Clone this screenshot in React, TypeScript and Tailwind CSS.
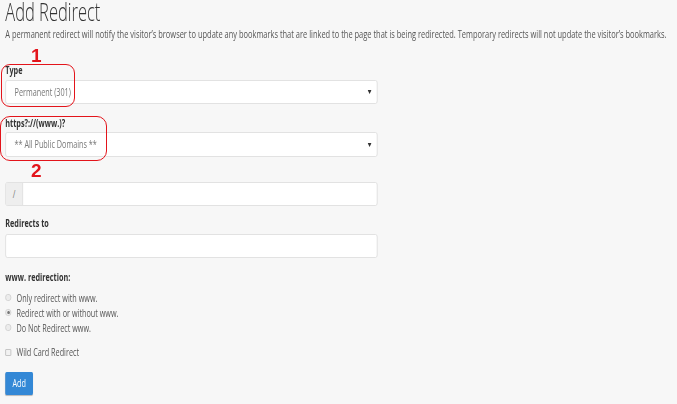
import React from 'react';

function Caret() {
  return (
    <svg width="6" height="4" viewBox="0 0 6 4" className="shrink-0">
      <path d="M0 0 L6 0 L3 4 Z" fill="#333" />
    </svg>
  );
}

function Radio({ checked, label }: { checked?: boolean; label: string }) {
  return (
    <div className="flex h-[15px] items-center gap-[8px]">
      <span className="flex h-[7px] w-[9px] items-center justify-center rounded-full border border-[#cfcfcf] bg-[#ececec]">
        {checked && <span className="h-[3px] w-[4px] rounded-full bg-[#777]" />}
      </span>
      <span className="text-[11px] leading-[15px] text-[#555]">{label}</span>
    </div>
  );
}

export default function App() {
  return (
    <div className="relative h-[404px] w-full overflow-hidden bg-[#f7f7f7] font-['Open_Sans',sans-serif]">
      <div className="w-[1026px] origin-top-left scale-x-[0.66] px-2">
        <h1 className="text-[25px] font-light leading-[22px] text-[#333]">Add Redirect</h1>
        <p className="mt-[5px] text-[11.3px] leading-[14px] text-[#555]">
          A permanent redirect will notify the visitor’s browser to update any bookmarks that are linked to the page that is being redirected. Temporary redirects will not update the visitor’s bookmarks.
        </p>

        <div className="w-[564px]">
          <label className="mt-[22px] block text-[11px] font-bold leading-[14px] text-[#333]">Type</label>
          <div className="mt-[3px] flex h-[24px] items-center justify-between rounded-[3px] border border-[#dcdcdc] bg-white pl-[13px] pr-[8px]">
            <span className="text-[11px] text-[#777]">Permanent (301)</span>
            <Caret />
          </div>

          <label className="mt-[12px] block text-[11px] font-bold leading-[14px] text-[#333]">https?://(www.)?</label>
          <div className="mt-[2px] flex h-[25px] items-center justify-between rounded-[3px] border border-[#dcdcdc] bg-white pl-[13px] pr-[8px]">
            <span className="text-[11px] text-[#777]">** All Public Domains **</span>
            <Caret />
          </div>

          <div className="mt-[25px] flex h-[24px] overflow-hidden rounded-[3px] border border-[#dcdcdc] bg-white">
            <span className="flex w-[26px] items-center justify-center border-r border-[#dcdcdc] bg-[#eee] text-[11px] text-[#777]">/</span>
            <span className="flex-1" />
          </div>

          <label className="mt-[10px] block text-[11px] font-bold leading-[14px] text-[#333]">Redirects to</label>
          <div className="mt-[4px] h-[24px] rounded-[3px] border border-[#dcdcdc] bg-white" />

          <label className="mt-[12px] block text-[11px] font-bold leading-[14px] text-[#333]">www. redirection:</label>
          <div className="mt-[6px] flex flex-col">
            <Radio label="Only redirect with www." />
            <Radio checked label="Redirect with or without www." />
            <Radio label="Do Not Redirect www." />
          </div>

          <div className="mt-[10px] flex h-[14px] items-center gap-[8px]">
            <span className="h-[7px] w-[9px] rounded-[1px] border border-[#bdbdbd] bg-[#f2f2f2]" />
            <span className="text-[11px] text-[#555]">Wild Card Redirect</span>
          </div>

          <button className="mt-[13px] flex h-[23px] w-[42px] items-center justify-center rounded-[2px] bg-[#3388d6] text-[11px] text-white shadow-[0_1px_1px_rgba(0,0,0,0.25)]">
            Add
          </button>
        </div>
      </div>

      <span className="absolute left-[31px] top-[46px] font-['Liberation_Sans',sans-serif] text-[19px] font-bold leading-[20px] text-[#e3141b]">1</span>
      <div className="absolute left-[1px] top-[64px] h-[43px] w-[74px] rounded-[9px] border-[1.5px] border-[#e3141b]" />
      <div className="absolute left-0 top-[116px] h-[45px] w-[107px] rounded-[10px] border-[1.5px] border-[#e3141b]" />
      <span className="absolute left-[31px] top-[161px] font-['Liberation_Sans',sans-serif] text-[19px] font-bold leading-[20px] text-[#e3141b]">2</span>
    </div>
  );
}
